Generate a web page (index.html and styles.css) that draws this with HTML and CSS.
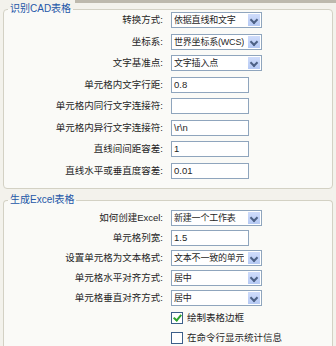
FILE: index.html
```html
<!DOCTYPE html>
<html lang="zh-CN">
<head>
    <meta charset="UTF-8">
    <title>识别CAD表格</title>
    <link rel="stylesheet" href="styles.css">
</head>
<body>
    <div class="top-strip"></div>

    <div class="group first">
        <span class="legend">识别CAD表格</span>
        <div class="rows">
            <label>转换方式:</label>
            <div class="select"><span>依据直线和文字</span><i class="drop"></i></div>

            <label>坐标系:</label>
            <div class="select"><span>世界坐标系(WCS)</span><i class="drop"></i></div>

            <label>文字基准点:</label>
            <div class="select"><span>文字插入点</span><i class="drop"></i></div>

            <label>单元格内文字行距:</label>
            <div class="input">0.8</div>

            <label>单元格内同行文字连接符:</label>
            <div class="input"></div>

            <label>单元格内异行文字连接符:</label>
            <div class="input">\r\n</div>

            <label>直线间间距容差:</label>
            <div class="input">1</div>

            <label>直线水平或垂直度容差:</label>
            <div class="input">0.01</div>
        </div>
    </div>

    <div class="group second">
        <span class="legend">生成Excel表格</span>
        <div class="rows tight">
            <label>如何创建Excel:</label>
            <div class="select"><span>新建一个工作表</span><i class="drop"></i></div>

            <label>单元格列宽:</label>
            <div class="input">1.5</div>

            <label>设置单元格为文本格式:</label>
            <div class="select"><span>文本不一致的单元</span><i class="drop"></i></div>

            <label>单元格水平对齐方式:</label>
            <div class="select"><span>居中</span><i class="drop"></i></div>

            <label>单元格垂直对齐方式:</label>
            <div class="select"><span>居中</span><i class="drop"></i></div>

            <div class="check"><i class="box checked"></i>绘制表格边框</div>
            <div class="check"><i class="box"></i>在命令行显示统计信息</div>
        </div>
    </div>
</body>
</html>
```

FILE: styles.css
```css
* {
    margin: 0;
    padding: 0;
    box-sizing: border-box;
}

html,
body {
    height: 346px;
    overflow: hidden;
}

body {
    background: #f3f2ec;
    color: #1f1f1f;
    font-family: "Liberation Sans", "Noto Sans CJK SC", sans-serif;
    font-size: 9.5px;
    width: 336px;
}

.top-strip {
    height: 3px;
    margin-left: 75px;
    background: #bdb9ad;
}

.group {
    display: flex;
    flex-direction: column;
    margin: 6px 3px 0 3px;
    border: 1px solid #d3d1c4;
    border-radius: 4px;
    background: #fafaf7;
}

.first {
    padding-bottom: 9px;
}

.second {
    margin-top: 11px;
    height: 146px;
    border-bottom: 0;
    border-radius: 4px 4px 0 0;
}

.legend {
    align-self: flex-start;
    height: 12px;
    margin: -7px 0 -3px 4px;
    padding: 0 2px;
    line-height: 12px;
    font-size: 10px;
    color: #2457a8;
    background: linear-gradient(#f3f2ec 50%, #fafaf7 50%);
}

.rows {
    display: grid;
    grid-template-columns: 159px 1fr;
    grid-auto-rows: 16px;
    column-gap: 8px;
    row-gap: 5.5px;
    align-items: center;
}

.rows.tight {
    row-gap: 4px;
    margin-top: 7px;
}

.rows label {
    text-align: right;
    line-height: 16px;
    white-space: nowrap;
}

.select,
.input {
    height: 16px;
    border: 1px solid #8fa5bd;
    background: #fff;
    line-height: 14px;
    padding-left: 2px;
    white-space: nowrap;
    overflow: hidden;
}

.select {
    width: 91px;
    display: flex;
    justify-content: space-between;
}

.select span {
    overflow: hidden;
    font-size: 9px;
    letter-spacing: -0.2px;
}

.input {
    width: 78px;
}

.drop {
    flex: none;
    width: 14px;
    height: 14px;
    border: 1px solid #fff;
    background: linear-gradient(#cfdcfb, #b5c9f4);
}

.drop::after {
    content: "";
    display: block;
    width: 4px;
    height: 4px;
    margin: 3px auto 0;
    border-right: 2px solid #4d6185;
    border-bottom: 2px solid #4d6185;
    transform: rotate(45deg);
}

.check {
    grid-column: 2;
    display: flex;
    align-items: center;
    gap: 4px;
    line-height: 16px;
}

.box {
    flex: none;
    width: 12px;
    height: 12px;
    border: 1px solid #3c5f8a;
    background: #fff;
}

.box.checked::after {
    content: "";
    display: block;
    width: 3px;
    height: 6px;
    margin: 0 0 0 3px;
    border-right: 2px solid #2ea32e;
    border-bottom: 2px solid #2ea32e;
    transform: rotate(40deg);
}
```
